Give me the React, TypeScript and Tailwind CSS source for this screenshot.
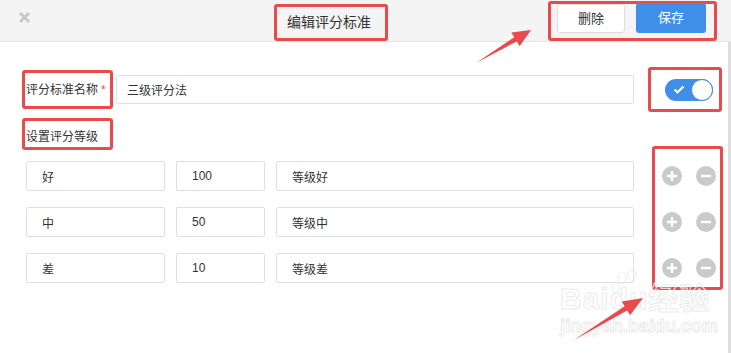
export default function App() {
  const rows = [
    { name: "好", score: "100", desc: "等级好" },
    { name: "中", score: "50", desc: "等级中" },
    { name: "差", score: "10", desc: "等级差" },
  ];

  return (
    <div
      className="relative w-[731px] h-[353px] overflow-hidden bg-white text-[#333] flex flex-col"
      style={{ fontFamily: '"Liberation Sans", "Noto Sans CJK SC", sans-serif' }}
    >
      {/* header */}
      <div className="flex items-start h-[42px] bg-[#f4f4f4] border-b border-[#e4e4e4] shrink-0">
        <svg className="ml-[19px] mt-[12px]" width="11" height="11" viewBox="0 0 11 11">
          <path d="M1 1L10 10M10 1L1 10" stroke="#c6c6c6" strokeWidth="2.6" />
        </svg>
        <div className="ml-[244px] mt-[4px] w-[114px] h-[37px] border-[3px] border-[#e94b4d] rounded-[3px] flex items-center pl-[10px] text-[14px] text-[#333]">
          编辑评分标准
        </div>
        <div className="ml-[160px] mt-[1px] w-[169px] h-[40px] border-[3px] border-[#e94b4d] rounded-[3px] flex items-start">
          <button className="ml-[6px] w-[68px] h-[29px] bg-white border border-[#dcdcdc] rounded-[3px] text-[13px] text-[#333]">
            删除
          </button>
          <button className="ml-[11px] w-[70px] h-[30px] -mt-[1px] bg-[#3f8fe8] rounded-[3px] text-[13px] text-white">
            保存
          </button>
        </div>
      </div>

      {/* body */}
      <div className="flex flex-1">
        <div className="flex-1 flex flex-col pt-[25px]">
          <div className="flex items-center h-[45px]">
            <div className="ml-[22px] w-[91px] h-[39px] border-[3px] border-[#e94b4d] rounded-[3px] flex items-center pl-[1px] text-[12px] whitespace-nowrap">
              评分标准名称<span className="ml-[3px] text-[#e0504e]">*</span>
            </div>
            <input
              readOnly
              value="三级评分法"
              className="ml-[3px] w-[518px] h-[29px] border border-[#e0e0e0] rounded-[2px] pl-[10px] text-[12px] text-[#333] outline-none"
            />
            <div className="ml-[14px] w-[74px] h-[45px] border-[3px] border-[#e94b4d] rounded-[3px] flex items-center pl-[14px]">
              <div className="w-[48px] h-[22px] rounded-full bg-[#3f8fe8] flex items-center">
                <svg className="ml-[8px]" width="12" height="9" viewBox="0 0 12 9">
                  <path d="M1.5 4.5L4.5 7.3L10.5 1.5" stroke="white" strokeWidth="2.2" fill="none" />
                </svg>
                <div className="ml-auto w-[22px] h-[22px] rounded-full bg-white border border-[#3f8fe8]" />
              </div>
            </div>
          </div>

          <div className="flex mt-[6px]">
            <div className="flex flex-col">
              <div className="ml-[22px] w-[91px] h-[32px] border-[3px] border-[#e94b4d] rounded-[3px] flex items-end pb-[1px] pl-[1px] text-[12px]">
                设置评分等级
              </div>
              <div className="mt-[11px] ml-[26px] flex flex-col gap-[16px]">
                {rows.map((r) => (
                  <div key={r.name} className="flex gap-[11px]">
                    <input
                      readOnly
                      value={r.name}
                      className="w-[139px] h-[30px] border border-[#e0e0e0] rounded-[2px] pl-[15px] text-[12px] text-[#333] outline-none"
                    />
                    <input
                      readOnly
                      value={r.score}
                      className="w-[89px] h-[30px] border border-[#e0e0e0] rounded-[2px] pl-[15px] text-[12px] text-[#333] outline-none"
                    />
                    <input
                      readOnly
                      value={r.desc}
                      className="w-[358px] h-[30px] border border-[#e0e0e0] rounded-[2px] pl-[15px] text-[12px] text-[#333] outline-none"
                    />
                  </div>
                ))}
              </div>
            </div>
            <div className="ml-[18px] mt-[28px] w-[71px] h-[144px] border-[3px] border-[#e94b4d] rounded-[3px] pt-[12px] flex flex-col gap-[16px]">
              {rows.map((r) => (
                <div key={r.name} className="h-[30px] flex items-center pl-[7px] gap-[14px]">
                  <svg width="20" height="20" viewBox="0 0 20 20">
                    <circle cx="10" cy="10" r="10" fill="#cacaca" />
                    <path d="M10 5V15M5 10H15" stroke="white" strokeWidth="2.4" />
                  </svg>
                  <svg width="20" height="20" viewBox="0 0 20 20">
                    <circle cx="10" cy="10" r="10" fill="#cacaca" />
                    <path d="M5 10H15" stroke="white" strokeWidth="2.4" />
                  </svg>
                </div>
              ))}
            </div>
          </div>
        </div>
        <div className="w-[3px] bg-[#dedede]" />
      </div>

      {/* watermark */}
      <div className="absolute left-[560px] top-[284px] flex flex-col leading-none text-transparent [-webkit-text-stroke:1px_#ebebeb] pointer-events-none">
        <div className="text-[30px] font-bold tracking-[1px]">Baidu经验</div>
        <div className="mt-[3px] text-[18px] font-bold">jingyan.baidu.com</div>
      </div>
      <svg className="absolute left-[612px] top-[268px] pointer-events-none" width="40" height="26" viewBox="0 0 40 26">
        <g fill="none" stroke="#ebebeb" strokeWidth="1">
          <ellipse cx="10" cy="10" rx="4" ry="6" />
          <ellipse cx="20" cy="7" rx="4" ry="6" />
          <ellipse cx="4" cy="20" rx="3.5" ry="5" />
        </g>
      </svg>

      {/* arrows */}
      <svg className="absolute left-0 top-0 pointer-events-none" width="731" height="353">
        <polygon
          points="476,63 516.8,41.4 519.6,46.2 531,30 511.4,32.4 514.2,37.2"
          fill="#e94b4d"
        />
        <polygon
          points="574,340 627.2,310.5 630.1,315.2 643,298 621.7,301.6 624.6,306.3"
          fill="#e94b4d"
        />
      </svg>
    </div>
  );
}
